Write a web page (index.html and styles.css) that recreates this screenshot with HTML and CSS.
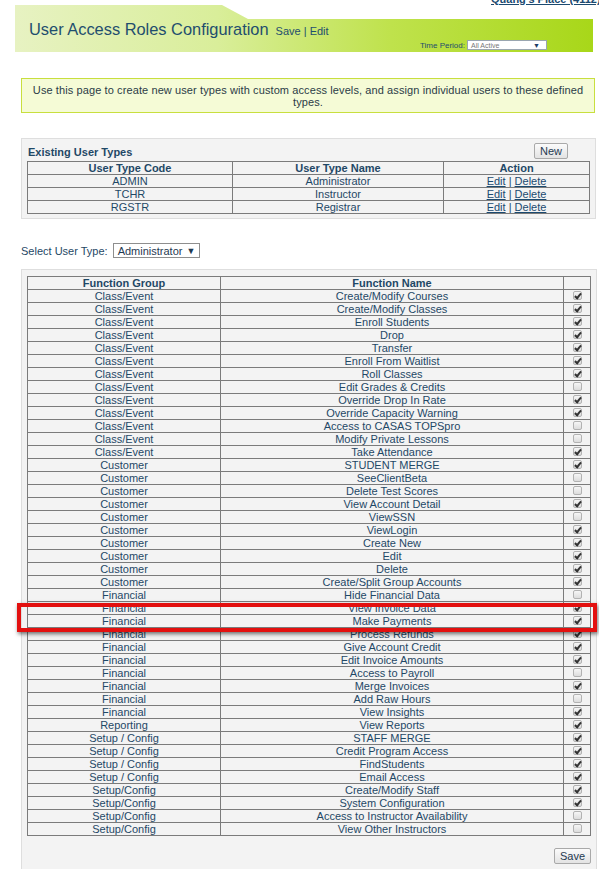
FILE: index.html
```html
<!DOCTYPE html>
<html lang="en">
<head>
  <meta charset="UTF-8">
  <title>User Access Roles Configuration</title>
  <link rel="stylesheet" href="styles.css">
</head>
<body>
  <div class="topbar"><a class="account" href="#">Quang's Place (4112)</a></div>

  <div class="banner">
    <div class="title-row">
      <h1>User Access Roles Configuration</h1>
      <span class="title-links"><a href="#">Save</a> | <a href="#">Edit</a></span>
    </div>
    <div class="period">
      <span>Time Period:</span>
      <span class="period-select"><span>All Active</span><span class="arrow">&#9660;</span></span>
    </div>
  </div>

  <div class="intro">Use this page to create new user types with custom access levels, and assign individual users to these defined types.</div>

  <div class="panel types">
    <div class="panel-head">
      <span class="panel-title">Existing User Types</span>
      <button class="btn new-btn">New</button>
    </div>
    <table class="grid">
      <colgroup><col style="width:205px"><col style="width:211px"><col></colgroup>
      <thead>
        <tr><th>User Type Code</th><th>User Type Name</th><th>Action</th></tr>
      </thead>
      <tbody>
        <tr><td>ADMIN</td><td>Administrator</td><td><a href="#">Edit</a> | <a href="#">Delete</a></td></tr>
        <tr><td>TCHR</td><td>Instructor</td><td><a href="#">Edit</a> | <a href="#">Delete</a></td></tr>
        <tr><td>RGSTR</td><td>Registrar</td><td><a href="#">Edit</a> | <a href="#">Delete</a></td></tr>
      </tbody>
    </table>
  </div>

  <div class="select-row">
    <span>Select User Type:</span>
    <span class="fake-select">Administrator <span class="arrow">&#9660;</span></span>
  </div>

  <div class="panel functions">
    <table class="grid">
      <colgroup><col style="width:193px"><col style="width:343px"><col></colgroup>
      <thead>
        <tr><th>Function Group</th><th>Function Name</th><th></th></tr>
      </thead>
      <tbody>
        <tr><td>Class/Event</td><td>Create/Modify Courses</td><td><span class="check on"></span></td></tr>
        <tr><td>Class/Event</td><td>Create/Modify Classes</td><td><span class="check on"></span></td></tr>
        <tr><td>Class/Event</td><td>Enroll Students</td><td><span class="check on"></span></td></tr>
        <tr><td>Class/Event</td><td>Drop</td><td><span class="check on"></span></td></tr>
        <tr><td>Class/Event</td><td>Transfer</td><td><span class="check on"></span></td></tr>
        <tr><td>Class/Event</td><td>Enroll From Waitlist</td><td><span class="check on"></span></td></tr>
        <tr><td>Class/Event</td><td>Roll Classes</td><td><span class="check on"></span></td></tr>
        <tr><td>Class/Event</td><td>Edit Grades &amp; Credits</td><td><span class="check"></span></td></tr>
        <tr><td>Class/Event</td><td>Override Drop In Rate</td><td><span class="check on"></span></td></tr>
        <tr><td>Class/Event</td><td>Override Capacity Warning</td><td><span class="check on"></span></td></tr>
        <tr><td>Class/Event</td><td>Access to CASAS TOPSpro</td><td><span class="check"></span></td></tr>
        <tr><td>Class/Event</td><td>Modify Private Lessons</td><td><span class="check"></span></td></tr>
        <tr><td>Class/Event</td><td>Take Attendance</td><td><span class="check on"></span></td></tr>
        <tr><td>Customer</td><td>STUDENT MERGE</td><td><span class="check on"></span></td></tr>
        <tr><td>Customer</td><td>SeeClientBeta</td><td><span class="check"></span></td></tr>
        <tr><td>Customer</td><td>Delete Test Scores</td><td><span class="check"></span></td></tr>
        <tr><td>Customer</td><td>View Account Detail</td><td><span class="check on"></span></td></tr>
        <tr><td>Customer</td><td>ViewSSN</td><td><span class="check"></span></td></tr>
        <tr><td>Customer</td><td>ViewLogin</td><td><span class="check on"></span></td></tr>
        <tr><td>Customer</td><td>Create New</td><td><span class="check on"></span></td></tr>
        <tr><td>Customer</td><td>Edit</td><td><span class="check on"></span></td></tr>
        <tr><td>Customer</td><td>Delete</td><td><span class="check on"></span></td></tr>
        <tr><td>Customer</td><td>Create/Split Group Accounts</td><td><span class="check on"></span></td></tr>
        <tr><td>Financial</td><td>Hide Financial Data</td><td><span class="check"></span></td></tr>
        <tr><td>Financial</td><td>View Invoice Data</td><td><span class="check on"></span></td></tr>
        <tr><td>Financial</td><td>Make Payments</td><td><span class="check on"></span></td></tr>
        <tr><td>Financial</td><td>Process Refunds</td><td><span class="check on"></span></td></tr>
        <tr><td>Financial</td><td>Give Account Credit</td><td><span class="check on"></span></td></tr>
        <tr><td>Financial</td><td>Edit Invoice Amounts</td><td><span class="check on"></span></td></tr>
        <tr><td>Financial</td><td>Access to Payroll</td><td><span class="check"></span></td></tr>
        <tr><td>Financial</td><td>Merge Invoices</td><td><span class="check on"></span></td></tr>
        <tr><td>Financial</td><td>Add Raw Hours</td><td><span class="check"></span></td></tr>
        <tr><td>Financial</td><td>View Insights</td><td><span class="check on"></span></td></tr>
        <tr><td>Reporting</td><td>View Reports</td><td><span class="check on"></span></td></tr>
        <tr><td>Setup / Config</td><td>STAFF MERGE</td><td><span class="check on"></span></td></tr>
        <tr><td>Setup / Config</td><td>Credit Program Access</td><td><span class="check on"></span></td></tr>
        <tr><td>Setup / Config</td><td>FindStudents</td><td><span class="check on"></span></td></tr>
        <tr><td>Setup / Config</td><td>Email Access</td><td><span class="check on"></span></td></tr>
        <tr><td>Setup/Config</td><td>Create/Modify Staff</td><td><span class="check on"></span></td></tr>
        <tr><td>Setup/Config</td><td>System Configuration</td><td><span class="check on"></span></td></tr>
        <tr><td>Setup/Config</td><td>Access to Instructor Availability</td><td><span class="check"></span></td></tr>
        <tr><td>Setup/Config</td><td>View Other Instructors</td><td><span class="check"></span></td></tr>
      </tbody>
    </table>
    <div class="panel-foot">
      <button class="btn">Save</button>
    </div>
    <!-- red callout drawn over the Make Payments row -->
    <div class="highlight"></div>
  </div>
</body>
</html>
```

FILE: styles.css
```css
/* base */
* {
  box-sizing: border-box;
}
html {
  overflow: hidden;
}
body {
  margin: 0;
  font-family: "Liberation Sans", Arial, sans-serif;
  font-size: 11px;
  color: #1f4866;
  background: #fff;
}
a {
  color: #1b4a70;
}

/* account link, cut off at the top of the window */
.topbar {
  height: 5px;
  overflow: hidden;
  white-space: nowrap;
}
.account {
  display: block;
  margin: -7px 0 0 491px;
  font-size: 11px;
  font-weight: bold;
  line-height: 12px;
}

/* green title banner */
.banner {
  margin: 0 6px 0 15px;
  height: 47px;
  padding: 14px 0 0 14px;
  background: linear-gradient(to right, #e7f2c2 0%, #d9ee9a 35%, #bfe24c 65%, #a8d719 100%);
  clip-path: polygon(0 0, 207px 0, 233px 14px, 100% 14px, 100% 100%, 0 100%);
}
.title-row {
  display: flex;
  align-items: baseline;
  gap: 7px;
}
h1 {
  margin: 0;
  font-size: 16.4px;
  font-weight: normal;
  line-height: 20px;
  color: #1f4e6e;
}
.title-links {
  font-size: 11px;
  color: #1f4e6e;
}
.title-links a {
  text-decoration: none;
  color: #1f4e6e;
}
.period {
  display: flex;
  justify-content: flex-end;
  align-items: center;
  gap: 2px;
  margin-top: 1px;
  padding-right: 46px;
  height: 10px;
  font-size: 8px;
  color: #1f4e6e;
}
.period-select {
  display: flex;
  justify-content: space-between;
  align-items: center;
  width: 80px;
  height: 10px;
  padding: 0 6px 0 3px;
  background: #fff;
  border: 1px solid #9aa6b0;
  font-size: 7px;
  color: #777;
}
.period-select .arrow {
  color: #1d3d66;
  font-size: 7px;
}

/* intro note */
.intro {
  margin: 26px 4px 0 21px;
  padding: 5px 6px 4px;
  border: 1px solid #c8df3e;
  background: #f5fbd6;
  text-align: center;
  line-height: 12px;
  letter-spacing: 0.1px;
  color: #2b3b47;
}

/* grey panels */
.panel {
  background: #f3f3f3;
  border: 1px solid #dedede;
  padding: 0 5px 4px 5px;
}
.types {
  margin: 25px 3px 0 21px;
}
.panel-head {
  display: flex;
  justify-content: space-between;
  align-items: flex-end;
  height: 22px;
  padding: 0 22px 3px 1px;
}
.panel-title {
  font-weight: bold;
  line-height: 12px;
}
.btn {
  height: 16px;
  padding: 0 5px;
  font-family: "Liberation Sans", Arial, sans-serif;
  font-size: 11px;
  color: #1f3a52;
  border: 1px solid #a9a9a9;
  border-radius: 2px;
  background: linear-gradient(#fbfbfb, #e3e3e3);
}
.new-btn {
  margin-bottom: -1px;
}

.grid {
  width: 100%;
  border-collapse: collapse;
  table-layout: fixed;
  line-height: 12px;
}
.grid th,
.grid td {
  border: 1px solid #7b7b7b;
  padding: 0;
  text-align: center;
  font-size: 11px;
  white-space: nowrap;
}
.grid th {
  font-weight: bold;
}

/* select user type */
.select-row {
  display: flex;
  align-items: center;
  gap: 5px;
  margin: 24px 0 0 21px;
}
.fake-select {
  display: inline-flex;
  align-items: center;
  height: 15px;
  padding: 0 4px;
  border: 1px solid #8e8e8e;
  background: #fff;
  color: #1f3a52;
}
.fake-select .arrow {
  margin-left: 4px;
  font-size: 9px;
}

/* function table panel */
.functions {
  position: relative;
  margin: 11px 2px 0 21px;
  padding: 6px 5px 10px 5px;
}
.check {
  position: relative;
  display: inline-block;
  width: 9px;
  height: 9px;
  margin-top: 1px;
  vertical-align: top;
  border: 1px solid #b2b2b2;
  border-radius: 2px;
  background: linear-gradient(#f6f6f6, #dcdcdc);
}
.check.on::after {
  content: "";
  position: absolute;
  left: 2px;
  top: 0;
  width: 2px;
  height: 5px;
  border: solid #333;
  border-width: 0 2px 2px 0;
  transform: rotate(40deg);
}
.panel-foot {
  display: flex;
  justify-content: flex-end;
  margin-top: 12px;
}
.highlight {
  position: absolute;
  left: -5px;
  top: 333px;
  width: 580px;
  height: 29px;
  border: 4px solid #e3100f;
  box-shadow: 1px 2px 4px rgba(0, 0, 0, 0.55);
  pointer-events: none;
}
```
